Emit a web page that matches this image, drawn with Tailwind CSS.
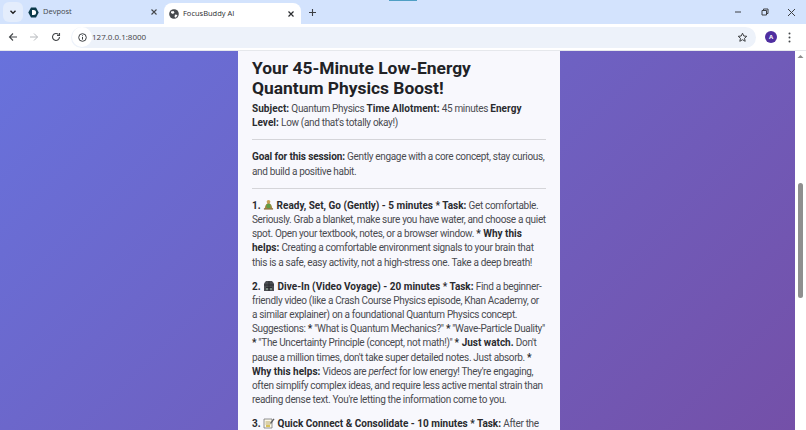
<!doctype html>
<html>

<head>
    <meta charset="UTF-8">
    <title>FocusBuddy AI</title>
    <script src="https://cdn.jsdelivr.net/npm/@tailwindcss/browser@4"></script>
</head>

<body class="bg-white">
    <div class="w-[806px] h-[430px] overflow-hidden flex flex-col font-['Roboto','Open_Sans',sans-serif]">

        <!-- tab strip -->
        <div class="h-[24px] bg-[#d3e3fd] flex items-end shrink-0 relative font-['Open_Sans',sans-serif]">
            <div class="absolute left-[389px] top-0 w-[28px] h-[1px] bg-[#4f9fc4]"></div>
            <div class="w-[20px] h-[20px] ml-[3px] mb-[2px] rounded-md bg-[#e4edfc] flex items-center justify-center">
                <svg width="10" height="10" viewBox="0 0 10 10" fill="none" stroke="#1f1f1f" stroke-width="1.4">
                    <path d="M2.500 3.800 5 6.300l2.500-2.500" />
                </svg>
            </div>
            <div class="w-[141px] h-[24px] flex items-center pl-[5px] pr-[6px] text-[7.500px] text-[#44474a]">
                <svg width="11" height="11" viewBox="0 0 11 11" class="mr-[4px]">
                    <path d="M3 .5h5L10.700 5.500 8 10.500H3L.3 5.500z" fill="#0b3a4a" />
                    <path d="M4 3h1.600a2.500 2.500 0 0 1 0 5H4z" fill="#fff" />
                </svg>
                <span class="flex-1">Devpost</span>
                <svg width="8" height="8" viewBox="0 0 8 8" stroke="#44474a" stroke-width="1.100">
                    <path d="M1.500 1.500l5 5M6.500 1.500l-5 5" />
                </svg>
            </div>
            <div class="w-[137px] h-[21px] bg-white rounded-t-lg flex items-center pl-[5px] pr-[6px] text-[7.500px] text-[#2b2d30]">
                <svg width="10" height="10" viewBox="0 0 10 10" class="mr-[4px]">
                    <circle cx="5" cy="5" r="4.800" fill="#45484c" />
                    <path d="M2 2.500 4.500 2l1 1.500L4 5 2 4zM6 5.500l2.500.5L7 8.800 5.500 8z" fill="#fff" />
                </svg>
                <span class="flex-1">FocusBuddy AI</span>
                <svg width="8" height="8" viewBox="0 0 8 8" stroke="#2b2d30" stroke-width="1.200">
                    <path d="M1.500 1.500l5 5M6.500 1.500l-5 5" />
                </svg>
            </div>
            <div class="w-[18px] h-[24px] ml-[2px] flex items-center justify-center">
                <svg width="9" height="9" viewBox="0 0 9 9" stroke="#3c3f43" stroke-width="1.100">
                    <path d="M4.500 1v7M1 4.500h7" />
                </svg>
            </div>
            <div class="flex-1"></div>
            <div class="w-[27px] h-[24px] flex items-center justify-center">
                <svg width="8" height="8" viewBox="0 0 8 8" stroke="#3c3f43" stroke-width="1">
                    <path d="M1 4h6" />
                </svg>
            </div>
            <div class="w-[27px] h-[24px] flex items-center justify-center">
                <svg width="8" height="8" viewBox="0 0 8 8" fill="none" stroke="#3c3f43" stroke-width="1">
                    <path d="M1 2.500h4.500V7H1zM2.500 2.500V1H7v4.500H5.500" />
                </svg>
            </div>
            <div class="w-[27px] mr-[1px] h-[24px] flex items-center justify-center">
                <svg width="9" height="9" viewBox="0 0 9 9" stroke="#3c3f43" stroke-width="1">
                    <path d="M1 1l7 7M8 1 1 8" />
                </svg>
            </div>
        </div>

        <!-- toolbar -->
        <div class="h-[27px] bg-white flex items-center shrink-0 border-b border-[#e6e8ec] font-['Open_Sans',sans-serif]">
            <svg width="10" height="10" viewBox="0 0 10 10" fill="none" stroke="#44474a" stroke-width="1.100" class="ml-[8px]">
                <path d="M9 5H1.500M5 1.500 1.500 5 5 8.500" />
            </svg>
            <svg width="10" height="10" viewBox="0 0 10 10" fill="none" stroke="#b4b7bb" stroke-width="1" class="ml-[11px]">
                <path d="M1 5h7.500M5 1.500 8.500 5 5 8.500" />
            </svg>
            <svg width="10" height="10" viewBox="0 0 10 10" fill="none" stroke="#44474a" stroke-width="1.100" class="ml-[12px]">
                <path d="M8.500 5A3.500 3.500 0 1 1 7.500 2.500" />
                <path d="M8.500 1v2.500H6" />
            </svg>
            <div class="ml-[10px] w-[685px] h-[21px] rounded-full bg-[#edf2fa] flex items-center text-[8px] text-[#3d4043] relative">
                <div class="w-[20px] h-[20px] rounded-full bg-white flex items-center justify-center ml-[1px]">
                    <svg width="9" height="9" viewBox="0 0 9 9" fill="none" stroke="#3d4043" stroke-width="1">
                        <circle cx="4.500" cy="4.500" r="3.800" />
                        <path d="M4.500 4v2.600M4.500 2.300v.9" />
                    </svg>
                </div>
                <span>127.0.0.1:8000</span>
                <svg width="11" height="11" viewBox="0 0 11 11" fill="none" stroke="#3d4043" stroke-width="1" class="absolute right-[8px] top-[5px]">
                    <path d="M5.500 1.200 6.800 4l3 .3L7.500 6.300l.7 3-2.700-1.600-2.700 1.600.7-3L1.200 4.300l3-.3z" />
                </svg>
            </div>
            <div class="ml-[9px] w-[12px] h-[12px] rounded-full bg-[#4f2ea0] text-white text-[6px] font-bold flex items-center justify-center">A</div>
            <svg width="3" height="11" viewBox="0 0 3 11" fill="#44474a" class="ml-[11px]">
                <circle cx="1.500" cy="1.500" r="1" />
                <circle cx="1.500" cy="5.500" r="1" />
                <circle cx="1.500" cy="9.500" r="1" />
            </svg>
        </div>

        <!-- page -->
        <div class="flex-1 flex min-h-0">
            <div class="flex-1 bg-linear-[135deg,#6872dc,#7450a8] flex justify-center overflow-hidden">
                <div class="w-[322px] h-fit bg-[#f8f8fd] px-[14px] pt-[7px] ml-[3px] text-[10px] tracking-[-0.33px] leading-[14.200px] text-[#4a4b50]">
                    <h1 class="text-[17.400px] tracking-normal leading-[20px] font-bold text-[#212226] mb-[4px] pr-[20px]">Your 45-Minute Low-Energy Quantum Physics Boost!</h1>
                    <p><b class="text-[#2a2b2f] tracking-[0.05px]">Subject:</b> Quantum Physics <b class="text-[#2a2b2f] tracking-[0.05px]">Time Allotment:</b> 45 minutes <b class="text-[#2a2b2f] tracking-[0.05px]">Energy Level:</b> Low (and that's totally okay!)</p>
                    <hr class="mt-[9px] mb-[10px] border-[#d5d5d9]">
                    <p><b class="text-[#2a2b2f] tracking-[-0.1px]">Goal for this session:</b> Gently engage with a core concept, stay curious, and build a positive habit.</p>
                    <hr class="mt-[9px] mb-[10px] border-[#d5d5d9]">
                    <p class="mb-[9.800px]"><b class="text-[#2a2b2f] tracking-[0px]">1. <svg width="11" height="12" viewBox="0 0 12 12" class="inline align-[-2px]"><circle cx="6" cy="2.500" r="2" fill="#c9a257" /><path d="M2 10c0-3 1.500-6 4-6s4 3 4 6z" fill="#a8873f" /><circle cx="6" cy="7" r="2.500" fill="#5f9e45" /><path d="M1 9.500h10v1.500H1z" fill="#8a6f38" /></svg> Ready, Set, Go (Gently) - 5 minutes * Task:</b> Get comfortable. Seriously. Grab a blanket, make sure you have water, and choose a quiet spot. Open your textbook, notes, or a browser window. <b class="text-[#2a2b2f] tracking-[0px]">* Why this helps:</b> Creating a comfortable environment signals to your brain that this is a safe, easy activity, not a high-stress one. Take a deep breath!</p>
                    <p class="mb-[9.800px]"><b class="text-[#2a2b2f] tracking-[0px]">2. <svg width="12" height="12" viewBox="0 0 12 12" class="inline align-[-2px]"><path d="M1 3.500 3 1h6l2 2.500V11H1z" fill="#4a4d52" /><path d="M1 5h10M3 7.500h6M6 1v10" stroke="#25272a" stroke-width=".8" /><path d="M3 8h2v2H3zM7 8h2v2H7z" fill="#7a8a80" /></svg> Dive-In (Video Voyage) - 20 minutes * Task:</b> Find a beginner-friendly video (like a Crash Course Physics episode, Khan Academy, or a similar explainer) on a foundational Quantum Physics concept. Suggestions: <b class="text-[#2a2b2f]">*</b> "What is Quantum Mechanics?" <b class="text-[#2a2b2f]">*</b> "Wave-Particle Duality" <b class="text-[#2a2b2f]">*</b> "The Uncertainty Principle (concept, not math!)" <b class="text-[#2a2b2f] tracking-[0px]">* Just watch.</b> Don't pause a million times, don't take super detailed notes. Just absorb. <b class="text-[#2a2b2f] tracking-[0px]">* Why this helps:</b> Videos are <i>perfect</i> for low energy! They're engaging, often simplify complex ideas, and require less active mental strain than reading dense text. You're letting the information come to you.</p>
                    <p><b class="text-[#2a2b2f] tracking-[0px]">3. <svg width="12" height="12" viewBox="0 0 12 12" class="inline align-[-2px]"><path d="M1 2h8v9H1z" fill="#fbf8ea" stroke="#77777a" stroke-width=".8" /><path d="M2.500 5h5M2.500 7h5" stroke="#b9a86a" /><path d="M3 8h4v2H3z" fill="#d8c25a" /><path d="M7 6 10.500 1.500 11.500 2.300 8 7z" fill="#5d5d60" /></svg> Quick Connect &amp; Consolidate - 10 minutes * Task:</b> After the video, jot down a few thoughts about what you watched and what stuck with you.</p>
                </div>
            </div>
            <!-- scrollbar -->
            <div class="w-[11px] bg-white shrink-0 flex flex-col items-center relative">
                <svg width="7" height="5" viewBox="0 0 7 5" fill="#8c8c8c" class="mt-[3px]">
                    <path d="M3.500 1 6.500 4H.5z" />
                </svg>
                <div class="absolute top-[132px] left-[3px] w-[5px] h-[115px] rounded-full bg-[#8f8f8f]"></div>
            </div>
        </div>
    </div>
</body>

</html>
